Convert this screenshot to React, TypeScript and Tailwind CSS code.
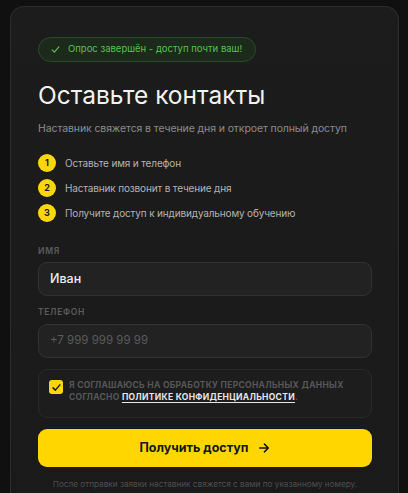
import React from "react";

const steps = [
  "Оставьте имя и телефон",
  "Наставник позвонит в течение дня",
  "Получите доступ к индивидуальному обучению",
];

export default function App() {
  return (
    <div
      className="h-[493px] w-[408px] overflow-hidden bg-[#101010] pt-[6px] pl-[10px] pr-[9px]"
      style={{ fontFamily: "Inter, 'Noto Sans', sans-serif" }}
    >
      <div className="rounded-t-[14px] border border-b-0 border-[#2c2c2c] bg-gradient-to-b from-[#1c1c1c] to-[#1a1a1a] pl-[27px] pr-[26px] pt-[29px] pb-[40px]">
        <div className="inline-flex h-[25px] items-center gap-[8px] rounded-full border border-[#2b4a2b] bg-[#1b2a1b] pl-[12px] pr-[13px]">
          <svg width="9" height="9" viewBox="0 0 12 12" fill="none">
            <path d="M1.5 6.5 L4.5 9.5 L10.5 2.5" stroke="#5cc052" strokeWidth="1.6" strokeLinecap="round" strokeLinejoin="round" />
          </svg>
          <span className="text-[9.5px] text-[#5cc052]">Опрос завершён - доступ почти ваш!</span>
        </div>

        <h1 className="mt-[18px] text-[24.5px] leading-[30px] font-normal text-[#f2f2f2]">
          Оставьте контакты
        </h1>
        <p className="mt-[11px] text-[10.5px] leading-[16px] tracking-[-0.01em] text-[#8c8c8c]">
          Наставник свяжется в течение дня и откроет полный доступ
        </p>

        <div className="mt-[17px] flex flex-col gap-[7px]">
          {steps.map((s, i) => (
            <div key={i} className="flex h-[18px] items-center gap-[9px]">
              <div className="flex h-[18px] w-[18px] shrink-0 items-center justify-center rounded-full bg-[#ffd60a] text-[9px] font-bold text-[#1a1a1a]">
                {i + 1}
              </div>
              <span className="text-[10px] tracking-[-0.015em] text-[#b3b3b3]">{s}</span>
            </div>
          ))}
        </div>

        <div className="mt-[23px] text-[8.5px] leading-[12px] font-semibold uppercase tracking-[0.08em] text-[#5c5c5c]">
          Имя
        </div>
        <div className="mt-[5px] flex h-[34px] items-center rounded-[9px] border border-[#323232] bg-[#222222] px-[11px] text-[12.5px] font-medium text-[#ededed]">
          Иван
        </div>

        <div className="mt-[10px] text-[8.5px] leading-[12px] font-semibold uppercase tracking-[0.08em] text-[#5c5c5c]">
          Телефон
        </div>
        <div className="mt-[6px] flex h-[34px] items-center rounded-[9px] border border-[#323232] bg-[#222222] px-[11px] text-[11.5px] text-[#5a5a5a]">
          +7 999 999 99 99
        </div>

        <div className="mt-[11px] flex h-[49px] items-start gap-[6px] rounded-[9px] border border-[#292929] bg-[#1d1d1d] pl-[10px] pr-[10px] pt-[9px]">
          <div className="mt-[1px] flex h-[14px] w-[14px] shrink-0 items-center justify-center rounded-[3px] bg-[#ffd60a]">
            <svg width="9" height="9" viewBox="0 0 12 12" fill="none">
              <path d="M1.5 6.5 L4.5 9.5 L10.5 2.5" stroke="#1a1a1a" strokeWidth="2" strokeLinecap="round" strokeLinejoin="round" />
            </svg>
          </div>
          <p className="text-[8.5px] leading-[12px] font-bold uppercase tracking-[0.035em] text-[#575757]">
            Я соглашаюсь на обработку персональных данных согласно{" "}
            <span className="text-[#e6e6e6] underline underline-offset-2">политике конфиденциальности</span>.
          </p>
        </div>

        <button className="mt-[11px] flex h-[38px] w-full items-center justify-center gap-[10px] rounded-[9px] bg-[#ffd600] text-[12.5px] font-bold text-[#161616]">
          Получить доступ
          <svg width="12" height="12" viewBox="0 0 14 14" fill="none">
            <path d="M2 7 H12 M7.5 2.5 L12 7 L7.5 11.5" stroke="#161616" strokeWidth="1.8" strokeLinecap="round" strokeLinejoin="round" />
          </svg>
        </button>

        <p className="mt-[11px] text-center text-[8.2px] leading-[12px] text-[#4f4f4f]">
          После отправки заявки наставник свяжется с вами по указанному номеру.
        </p>
      </div>
    </div>
  );
}
